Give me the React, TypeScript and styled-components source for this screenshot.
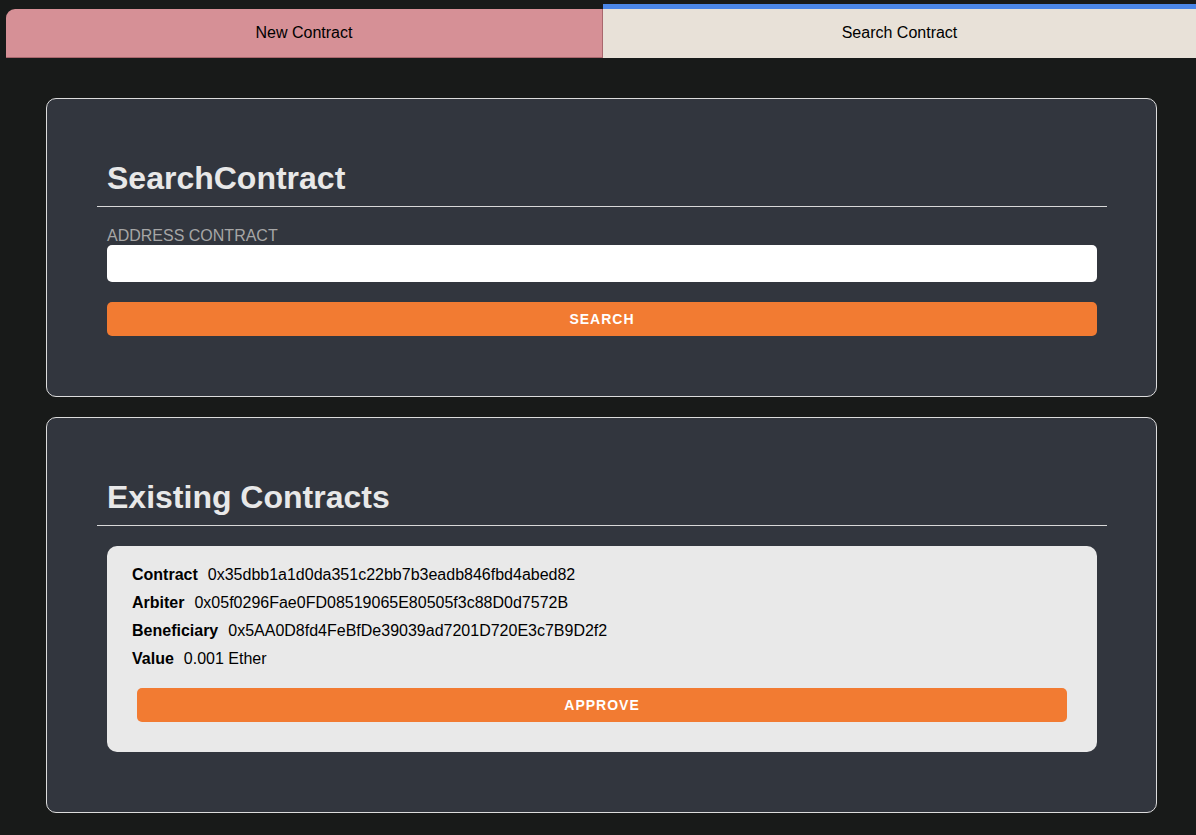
import React from "react";
import styled, { createGlobalStyle } from "styled-components";

const GlobalStyle = createGlobalStyle`
  html, body {
    margin: 0;
    padding: 0;
    background: #181a19;
    overflow-x: hidden;
  }
  body {
    font-family: "Liberation Sans", Arial, Helvetica, sans-serif;
  }
  * { box-sizing: border-box; }
`;

const Page = styled.div`
  display: flex;
  flex-direction: column;
  min-height: 835px;
`;

const TabBar = styled.nav`
  display: flex;
  align-items: flex-end;
  padding: 4px 0 0 6px;
`;

const Tab = styled.button<{ $active?: boolean }>`
  display: flex;
  align-items: center;
  justify-content: center;
  font-family: "Liberation Sans", Arial, sans-serif;
  font-size: 16px;
  color: #000;
  cursor: pointer;
  border: none;
  margin: 0;
  padding: 0 0 1px;
  ${(p) =>
    p.$active
      ? `
    flex: 1;
    height: 54px;
    background: #e8e1d8;
    border-top: 5px solid #4a86e8;
    padding-bottom: 2px;
  `
      : `
    width: 597px;
    height: 49px;
    background: #d69096;
    border-right: 1px solid #a9676d;
    border-bottom: 1px solid #a9676d;
    border-top-left-radius: 9px;
  `}
`;

const Main = styled.main`
  display: flex;
  flex-direction: column;
  gap: 20px;
  padding: 40px 0 20px 46px;
`;

const Card = styled.section`
  width: 1111px;
  background: #32363e;
  border: 1px solid #dcdcdc;
  border-radius: 10px;
  padding: 61px 49px 60px 50px;
  display: flex;
  flex-direction: column;
`;

const Title = styled.h1`
  margin: 0 10px;
  font-size: 32px;
  line-height: 36px;
  font-weight: 700;
  color: #e8e8e8;
`;

const Rule = styled.hr`
  margin: 10px 0 20px;
  border: none;
  height: 1px;
  background: #d8d8d8;
`;

const Field = styled.label`
  display: flex;
  flex-direction: column;
  margin: 0 10px;
`;

const FieldLabel = styled.span`
  font-size: 16px;
  line-height: 18px;
  color: #a6a6a6;
  text-transform: uppercase;
`;

const Input = styled.input`
  height: 37px;
  border: none;
  border-radius: 5px;
  background: #fff;
  padding: 0 10px;
  font-size: 16px;
  font-family: "Liberation Sans", Arial, sans-serif;
  outline: none;
`;

const ActionButton = styled.button<{ $inset?: number }>`
  height: 34px;
  margin: 20px ${(p) => p.$inset ?? 10}px 0;
  border: none;
  border-radius: 5px;
  background: #f27b32;
  color: #fff;
  font-family: "Liberation Sans", Arial, sans-serif;
  font-size: 14px;
  font-weight: 700;
  letter-spacing: 1px;
  text-transform: uppercase;
  cursor: pointer;
`;

const ContractBox = styled.div`
  margin: 0 10px;
  background: #e9e9e9;
  border-radius: 10px;
  padding: 20px 25px 30px;
  display: flex;
  flex-direction: column;
`;

const Rows = styled.ul`
  list-style: none;
  margin: 0;
  padding: 0;
  display: flex;
  flex-direction: column;
  gap: 10px;
`;

const Row = styled.li`
  display: flex;
  gap: 10px;
  font-size: 16px;
  line-height: 18px;
  color: #000;
`;

const RowLabel = styled.span`
  font-weight: 700;
`;

const contract = [
  ["Contract", "0x35dbb1a1d0da351c22bb7b3eadb846fbd4abed82"],
  ["Arbiter", "0x05f0296Fae0FD08519065E80505f3c88D0d7572B"],
  ["Beneficiary", "0x5AA0D8fd4FeBfDe39039ad7201D720E3c7B9D2f2"],
  ["Value", "0.001 Ether"],
];

export default function App() {
  return (
    <>
      <GlobalStyle />
      <Page>
        <TabBar>
          <Tab>New Contract</Tab>
          <Tab $active>Search Contract</Tab>
        </TabBar>
        <Main>
          <Card>
            <Title>SearchContract</Title>
            <Rule />
            <Field>
              <FieldLabel>Address Contract</FieldLabel>
              <Input type="text" />
            </Field>
            <ActionButton>Search</ActionButton>
          </Card>
          <Card>
            <Title>Existing Contracts</Title>
            <Rule />
            <ContractBox>
              <Rows>
                {contract.map(([k, v]) => (
                  <Row key={k}>
                    <RowLabel>{k}</RowLabel>
                    <span>{v}</span>
                  </Row>
                ))}
              </Rows>
              <ActionButton $inset={5}>Approve</ActionButton>
            </ContractBox>
          </Card>
        </Main>
      </Page>
    </>
  );
}
